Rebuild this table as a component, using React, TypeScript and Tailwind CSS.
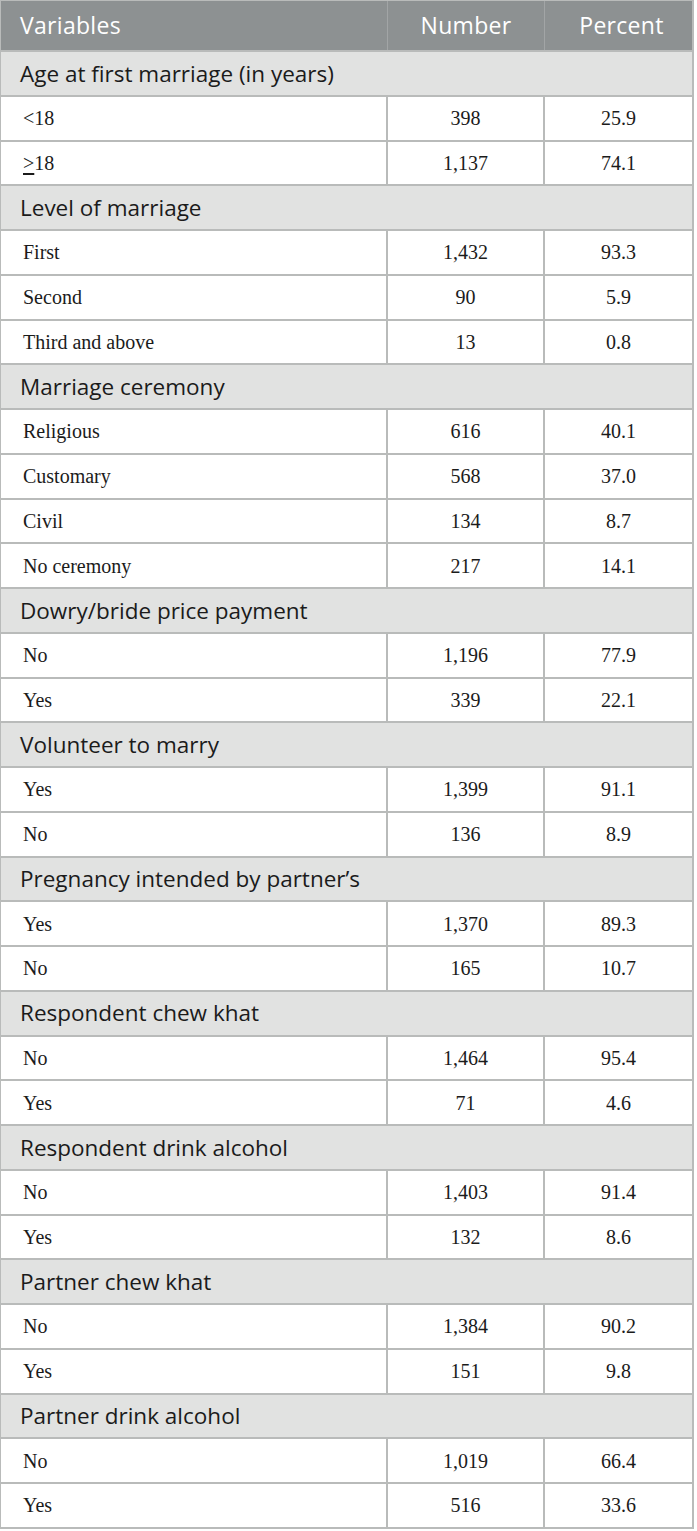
import React from "react";

type Section = {
  title: string;
  rows: [string, string, string][];
};

const sections: Section[] = [
  {
    title: "Age at first marriage (in years)",
    rows: [
      ["<18", "398", "25.9"],
      ["≥18", "1,137", "74.1"],
    ],
  },
  {
    title: "Level of marriage",
    rows: [
      ["First", "1,432", "93.3"],
      ["Second", "90", "5.9"],
      ["Third and above", "13", "0.8"],
    ],
  },
  {
    title: "Marriage ceremony",
    rows: [
      ["Religious", "616", "40.1"],
      ["Customary", "568", "37.0"],
      ["Civil", "134", "8.7"],
      ["No ceremony", "217", "14.1"],
    ],
  },
  {
    title: "Dowry/bride price payment",
    rows: [
      ["No", "1,196", "77.9"],
      ["Yes", "339", "22.1"],
    ],
  },
  {
    title: "Volunteer to marry",
    rows: [
      ["Yes", "1,399", "91.1"],
      ["No", "136", "8.9"],
    ],
  },
  {
    title: "Pregnancy intended by partner’s",
    rows: [
      ["Yes", "1,370", "89.3"],
      ["No", "165", "10.7"],
    ],
  },
  {
    title: "Respondent chew khat",
    rows: [
      ["No", "1,464", "95.4"],
      ["Yes", "71", "4.6"],
    ],
  },
  {
    title: "Respondent drink alcohol",
    rows: [
      ["No", "1,403", "91.4"],
      ["Yes", "132", "8.6"],
    ],
  },
  {
    title: "Partner chew khat",
    rows: [
      ["No", "1,384", "90.2"],
      ["Yes", "151", "9.8"],
    ],
  },
  {
    title: "Partner drink alcohol",
    rows: [
      ["No", "1,019", "66.4"],
      ["Yes", "516", "33.6"],
    ],
  },
];

const sans = "font-['Open_Sans',sans-serif]";
const serif = "font-['Liberation_Serif',serif]";

function Label({ text }: { text: string }) {
  // the ≥ sign is printed as an underlined >
  if (text.startsWith("≥")) {
    return (
      <span>
        <span className="underline underline-offset-[3px]">&gt;</span>
        {text.slice(1)}
      </span>
    );
  }
  return <span>{text}</span>;
}

export default function App() {
  return (
    <div className="bg-white w-[697px] h-[1531px] text-[#1b1b1b]">
      <div className="w-[694px] border border-[#b9bbba] border-b-2 border-r-2 flex flex-col">
        {/* Header */}
        <div className={`flex h-[49px] bg-[#8d9192] text-white text-[23px] tracking-[0.3px] ${sans}`}>
          <div className="w-[387px] flex items-center pl-[19px] border-r border-[#a2a5a6]">
            Variables
          </div>
          <div className="w-[157px] flex items-center justify-center border-r border-[#a2a5a6]">
            Number
          </div>
          <div className="flex-1 flex items-center justify-center pl-[6px]">Percent</div>
        </div>

        {sections.map((s) => (
          <React.Fragment key={s.title}>
            <div
              className={`flex items-center h-[44.75px] bg-[#e1e2e1] border-t-2 border-[#b9bbba] pl-[19px] text-[22.5px] ${sans}`}
            >
              {s.title}
            </div>
            {s.rows.map((r, i) => (
              <div
                key={i}
                className={`flex h-[44.75px] border-t-2 border-[#b9bbba] text-[20px] ${serif}`}
              >
                <div className="w-[387px] flex items-center pl-[22px] border-r-2 border-[#b9bbba]">
                  <Label text={r[0]} />
                </div>
                <div className="w-[157px] flex items-center justify-center border-r-2 border-[#b9bbba]">
                  {r[1]}
                </div>
                <div className="flex-1 flex items-center justify-center">{r[2]}</div>
              </div>
            ))}
          </React.Fragment>
        ))}
      </div>
    </div>
  );
}
